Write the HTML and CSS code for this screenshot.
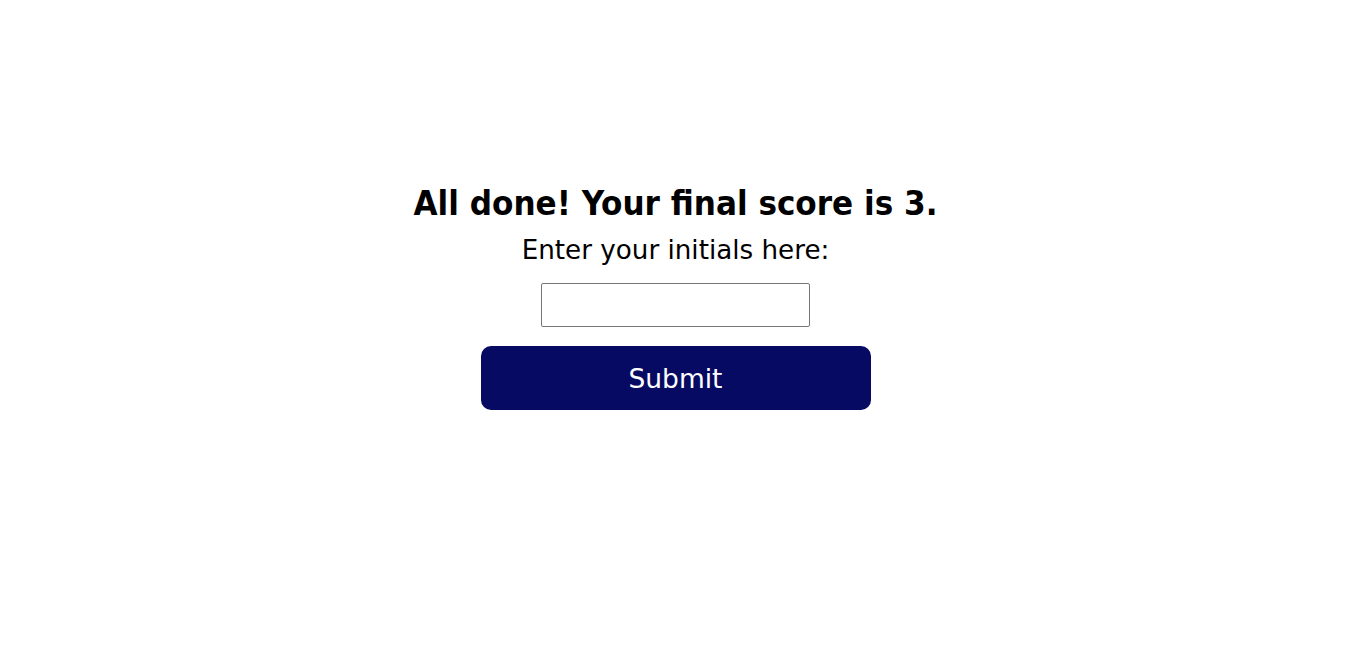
FILE: index.html
```html
<!DOCTYPE html>
<html>
<head>
<meta charset="utf-8">
<link rel="stylesheet" href="styles.css">
</head>
<body>
<main class="page">
  <section class="done">
    <h1 class="title">All done! Your final score is 3.</h1>
    <label class="label" for="initials">Enter your initials here:</label>
    <input class="initials" id="initials" type="text">
    <button class="submit" type="button">Submit</button>
  </section>
</main>
</body>
</html>
```
FILE: styles.css
```css
html, body {
  margin: 0;
  background: #fff;
}
.page {
  padding: 182px 14px 0 0;
  font-family: "DejaVu Sans", sans-serif;
}
.done {
  display: flex;
  flex-direction: column;
  align-items: center;
}
.title {
  margin: 0;
  font-family: "DejaVu Sans Condensed", "DejaVu Sans", sans-serif;
  font-size: 34.6px;
  font-weight: bold;
  line-height: 42px;
  color: #000;
}
.label {
  margin-top: 11px;
  font-size: 26.2px;
  line-height: 30px;
  color: #000;
}
.initials {
  margin-top: 18px;
  box-sizing: border-box;
  width: 269px;
  height: 44px;
  border: 1px solid #767676;
  border-radius: 2px;
  padding: 0 4px;
  font-size: 20px;
}
.submit {
  margin-top: 19px;
  width: 390px;
  height: 64px;
  border: none;
  border-radius: 10px;
  background: #060a63;
  color: #fff;
  font-family: "DejaVu Sans", sans-serif;
  font-size: 26.5px;
}
```
